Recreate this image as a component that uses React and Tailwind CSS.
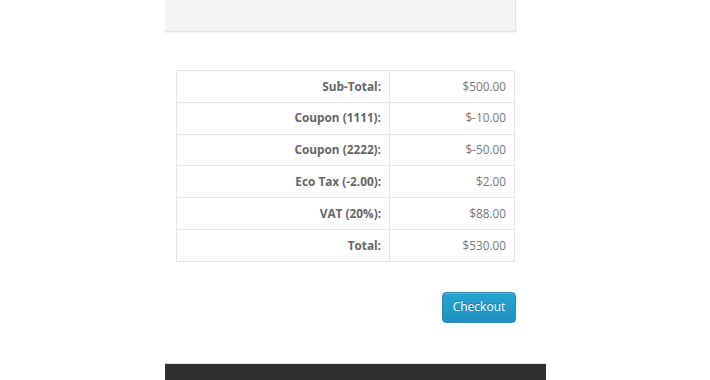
export default function App() {
  const rows = [
    ["Sub-Total:", "$500.00"],
    ["Coupon (1111):", "$-10.00"],
    ["Coupon (2222):", "$-50.00"],
    ["Eco Tax (-2.00):", "$2.00"],
    ["VAT (20%):", "$88.00"],
    ["Total:", "$530.00"],
  ];
  return (
    <div className="w-[710px] h-[380px] bg-white overflow-hidden font-['Open_Sans',sans-serif]">
      {/* panel above the totals */}
      <div className="ml-[165px] w-[351px] h-[32px] bg-[#f5f5f5] border-b border-r border-[#e3e3e3] shadow-[0_1px_2px_rgba(0,0,0,0.06)]" />

      {/* order totals */}
      <table className="ml-[176px] mt-[38px] w-[339px] border-collapse text-[11.8px]">
        <tbody>
          {rows.map(([label, value]) => (
            <tr key={label} className="h-[31.8px]">
              <td className="w-[213px] border border-[#e6e6e6] pr-[8px] text-right font-bold text-[#666]">
                {label}
              </td>
              <td className="border border-[#e6e6e6] pr-[8px] text-right text-[#777]">
                {value}
              </td>
            </tr>
          ))}
        </tbody>
      </table>

      <div className="w-[516px] flex justify-end mt-[30px]">
        <button className="w-[74px] h-[31px] rounded-[4px] border border-[#1f8fba] bg-gradient-to-b from-[#26a4d4] to-[#1f91bd] text-white text-[12px] [text-shadow:0_-1px_0_rgba(0,0,0,0.25)] shadow-[inset_0_1px_0_rgba(255,255,255,0.2)]">
          Checkout
        </button>
      </div>

      {/* footer */}
      <div className="ml-[165px] mt-[40px] w-[381px] h-[40px] bg-[#303030] border-t border-[#e0e0e0]" />
    </div>
  );
}
